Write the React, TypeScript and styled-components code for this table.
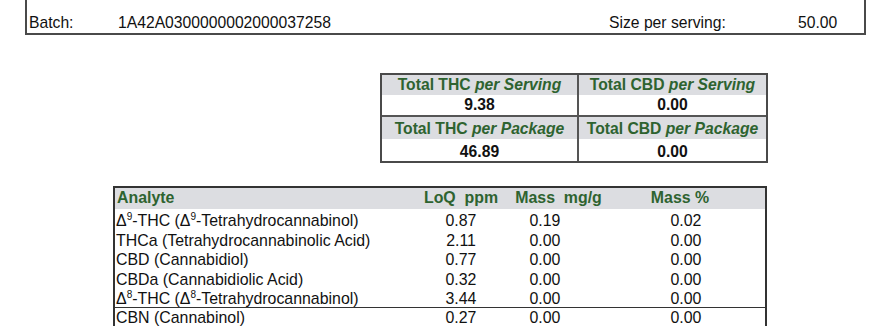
import React from 'react';
import styled, { createGlobalStyle } from 'styled-components';

const GlobalStyle = createGlobalStyle`
  *, *::before, *::after { box-sizing: border-box; }
  html, body { margin: 0; padding: 0; background: #fff; }
  body { font-family: "Liberation Sans", Arial, sans-serif; color: #111; }
`;

const GREEN = '#2e6330';
const HEAD_BG = '#dcdde1';

const Page = styled.div`
  width: 878px;
  height: 334px;
  overflow: hidden;
  display: flex;
  flex-direction: column;
  font-size: 15.7px;
`;

const InfoBox = styled.div`
  margin-left: 25px;
  width: 841px;
  border: 2px solid #4a4a4a;
  border-top: none;
`;

const InfoRow = styled.div`
  display: grid;
  grid-template-columns: 91px 491px 189px 1fr;
  padding-top: 14px;
  padding-bottom: 1px;
  line-height: 18px;
`;

const InfoCell = styled.span<{ $pad?: number }>`
  padding-left: ${(p) => p.$pad ?? 0}px;
  white-space: nowrap;
`;

const Summary = styled.div`
  margin: 38px 0 0 380px;
  width: 388px;
  border: 2px solid #4a4a4a;
  display: grid;
  grid-template-columns: 195px 1fr;
`;

const SumCell = styled.div<{ $head?: boolean; $h: number; $right?: boolean; $sep?: boolean; $pt?: number }>`
  height: ${(p) => p.$h}px;
  padding-top: ${(p) => p.$pt ?? 0}px;
  display: flex;
  align-items: center;
  justify-content: center;
  white-space: pre;
  font-weight: bold;
  background: ${(p) => (p.$head ? HEAD_BG : '#fff')};
  color: ${(p) => (p.$head ? GREEN : '#111')};
  border-left: ${(p) => (p.$right ? '2px solid #555' : 'none')};
  border-top: ${(p) => (p.$sep ? '2px solid #555' : 'none')};
`;

const Em = styled.em`
  font-style: italic;
`;

const Analytes = styled.div`
  margin: 23px 0 0 113px;
  width: 654px;
  border: 2px solid #333;
  border-bottom: none;
  font-size: 15.9px;
`;

const ARow = styled.div<{ $head?: boolean; $divider?: boolean; $h: number; $pt: number }>`
  display: grid;
  grid-template-columns: 305px 82px 105px 1fr;
  align-items: start;
  height: ${(p) => p.$h}px;
  padding-top: ${(p) => p.$pt}px;
  background: ${(p) => (p.$head ? HEAD_BG : '#fff')};
  color: ${(p) => (p.$head ? GREEN : '#111')};
  font-weight: ${(p) => (p.$head ? 'bold' : 'normal')};
  border-top: ${(p) => (p.$divider ? '1.5px solid #333' : 'none')};
`;

const ACell = styled.div<{ $align?: 'left' | 'center'; $pl?: number; $pr?: number }>`
  text-align: ${(p) => p.$align ?? 'center'};
  padding-left: ${(p) => p.$pl ?? 0}px;
  padding-right: ${(p) => p.$pr ?? 0}px;
  white-space: pre;
  line-height: 18px;
`;

const Sup = styled.sup`
  font-size: 10px;
  line-height: 0;
  vertical-align: 6px;
`;

type Row = { name: React.ReactNode; loq: string; mg: string; pct: string; divider?: boolean };

const rows: Row[] = [
  {
    name: (
      <>
        Δ<Sup>9</Sup>-THC (Δ<Sup>9</Sup>-Tetrahydrocannabinol)
      </>
    ),
    loq: '0.87',
    mg: '0.19',
    pct: '0.02',
  },
  { name: 'THCa (Tetrahydrocannabinolic Acid)', loq: '2.11', mg: '0.00', pct: '0.00' },
  { name: 'CBD (Cannabidiol)', loq: '0.77', mg: '0.00', pct: '0.00' },
  { name: 'CBDa (Cannabidiolic Acid)', loq: '0.32', mg: '0.00', pct: '0.00' },
  {
    name: (
      <>
        Δ<Sup>8</Sup>-THC (Δ<Sup>8</Sup>-Tetrahydrocannabinol)
      </>
    ),
    loq: '3.44',
    mg: '0.00',
    pct: '0.00',
  },
  { name: 'CBN (Cannabinol)', loq: '0.27', mg: '0.00', pct: '0.00', divider: true },
];

export default function App() {
  return (
    <>
      <GlobalStyle />
      <Page>
        <InfoBox>
          <InfoRow>
            <InfoCell $pad={2}>Batch:</InfoCell>
            <InfoCell>1A42A0300000002000037258</InfoCell>
            <InfoCell>Size per serving:</InfoCell>
            <InfoCell>50.00</InfoCell>
          </InfoRow>
        </InfoBox>

        <Summary>
          <SumCell $head $h={20}>
            Total THC <Em>per Serving</Em>
          </SumCell>
          <SumCell $head $right $h={20}>
            Total CBD <Em>per Serving</Em>
          </SumCell>
          <SumCell $h={20}>9.38</SumCell>
          <SumCell $right $h={20}>0.00</SumCell>
          <SumCell $head $sep $h={24} $pt={1}>
            Total THC <Em>per Package</Em>
          </SumCell>
          <SumCell $head $right $sep $h={24} $pt={1}>
            Total CBD <Em>per Package</Em>
          </SumCell>
          <SumCell $h={22} $pt={3}>46.89</SumCell>
          <SumCell $right $h={22} $pt={3}>0.00</SumCell>
        </Summary>

        <Analytes>
          <ARow $head $h={21} $pt={1}>
            <ACell $align="left" $pl={2}>Analyte</ACell>
            <ACell>{'LoQ  ppm'}</ACell>
            <ACell $pl={8}>{'Mass  mg/g'}</ACell>
            <ACell $pr={12}>Mass %</ACell>
          </ARow>
          {rows.map((r, i) => (
            <ARow key={i} $h={19.5} $pt={r.divider ? 1 : 3} $divider={r.divider}>
              <ACell $align="left" $pl={1}>{r.name}</ACell>
              <ACell>{r.loq}</ACell>
              <ACell $pr={19}>{r.mg}</ACell>
              <ACell>{r.pct}</ACell>
            </ARow>
          ))}
        </Analytes>
      </Page>
    </>
  );
}
